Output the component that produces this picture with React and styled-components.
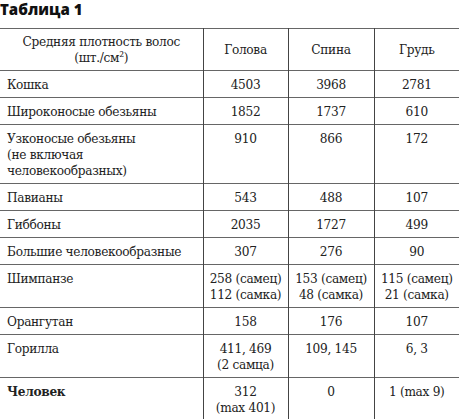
import React from "react";
import styled, { createGlobalStyle } from "styled-components";

const Global = createGlobalStyle`
  html, body { margin: 0; padding: 0; background: #fff; }
  body { font-family: "DejaVu Serif", serif; color: #222; }
`;

const rows = [
  { name: "Кошка", head: ["4503"], back: ["3968"], chest: ["2781"] },
  { name: "Широконосые обезьяны", head: ["1852"], back: ["1737"], chest: ["610"] },
  {
    name: ["Узконосые обезьяны", "(не включая", "человекообразных)"],
    head: ["910"], back: ["866"], chest: ["172"],
  },
  { name: "Павианы", head: ["543"], back: ["488"], chest: ["107"] },
  { name: "Гиббоны", head: ["2035"], back: ["1727"], chest: ["499"] },
  { name: "Большие человекообразные", head: ["307"], back: ["276"], chest: ["90"] },
  {
    name: "Шимпанзе",
    head: ["258 (самец)", "112 (самка)"],
    back: ["153 (самец)", "48 (самка)"],
    chest: ["115 (самец)", "21 (самка)"],
  },
  { name: "Орангутан", head: ["158"], back: ["176"], chest: ["107"] },
  { name: "Горилла", head: ["411, 469", "(2 самца)"], back: ["109, 145"], chest: ["6, 3"] },
  { name: "Человек", bold: true, head: ["312", "(max 401)"], back: ["0"], chest: ["1 (max 9)"] },
];

function Lines({ items }) {
  const list = Array.isArray(items) ? items : [items];
  return list.map((t, i) => <Line key={i}>{t}</Line>);
}

export default function App() {
  return (
    <>
      <Global />
      <Page>
        <Title>Таблица 1</Title>
        <Table>
          <colgroup>
            <col style={{ width: 203 }} />
            <col style={{ width: 85 }} />
            <col style={{ width: 86 }} />
            <col style={{ width: 85 }} />
          </colgroup>
          <thead>
            <tr>
              <Th>
                <Line>Средняя плотность волос</Line>
                <Line>(шт./см²)</Line>
              </Th>
              <Th>Голова</Th>
              <Th>Спина</Th>
              <Th>Грудь</Th>
            </tr>
          </thead>
          <tbody>
            {rows.map((r, i) => (
              <tr key={i}>
                <NameCell $bold={r.bold}>
                  <Lines items={r.name} />
                </NameCell>
                <Td><Lines items={r.head} /></Td>
                <Td><Lines items={r.back} /></Td>
                <Td><Lines items={r.chest} /></Td>
              </tr>
            ))}
          </tbody>
        </Table>
      </Page>
    </>
  );
}

const Page = styled.div`
  width: 459px;
  height: 419px;
  overflow: hidden;
`;

const Title = styled.div`
  font-family: "Open Sans", "DejaVu Sans", sans-serif;
  font-weight: 800;
  font-size: 15px;
  line-height: 16px;
  color: #111;
  padding-top: 1px;
  height: 27px;
`;

const Table = styled.table`
  width: 459px;
  border-collapse: collapse;
  table-layout: fixed;
  font-family: "DejaVu Serif Condensed", "DejaVu Serif", serif;
  font-size: 13.5px;
  letter-spacing: -0.3px;
  line-height: 16px;
  color: #222;
  border-top: 1px solid #666;
  tr { border-bottom: 1px solid #666; }
  td + td, th + th { border-left: 1px solid #444; }
`;

const Th = styled.th`
  font-weight: 400;
  text-align: center;
  vertical-align: middle;
  padding: 4px 6px 5px;
  height: 32px;
`;

const Td = styled.td`
  text-align: center;
  vertical-align: top;
  padding: 5px 2px 5px;
  white-space: nowrap;
`;

const NameCell = styled.td`
  text-align: left;
  vertical-align: top;
  padding: 5px 7px;
  font-weight: ${(p) => (p.$bold ? 700 : 400)};
  white-space: nowrap;
`;

const Line = styled.div``;
